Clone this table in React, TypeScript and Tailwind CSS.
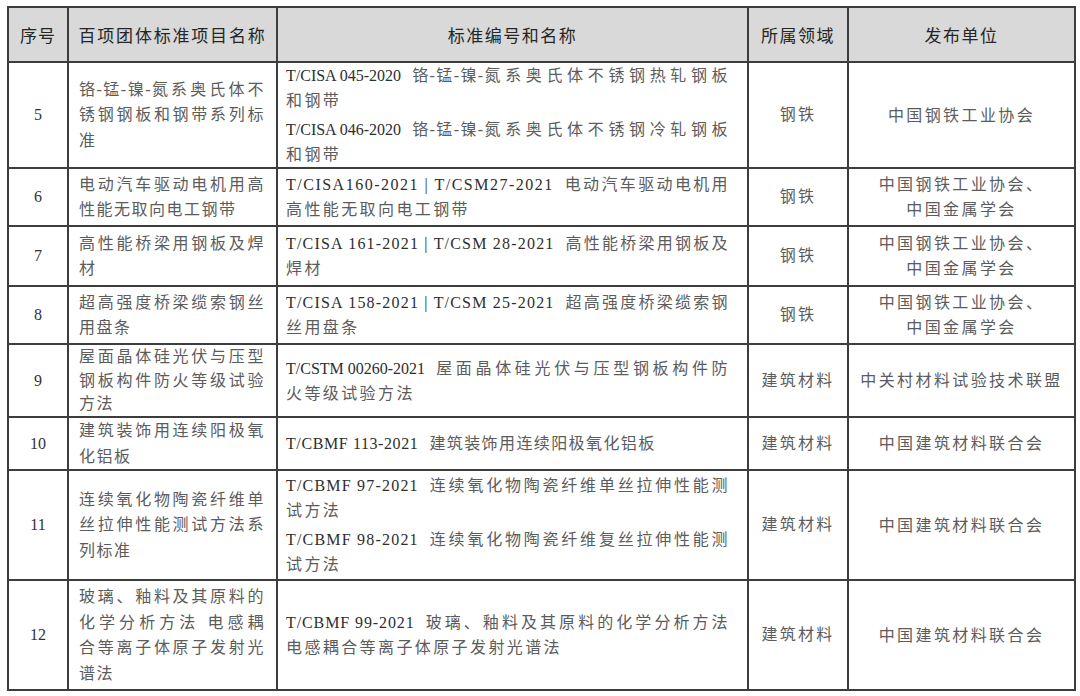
type Std = { code: string; title: string[]; ct?: string; tt?: string };

type Row = {
  no: string;
  name: string[];
  standards: Std[];
  field: string;
  org: string[];
  h: string;
  tight?: boolean;
};

// title[0] follows the code on the first line, the rest are extra lines
// ct = tracking of the code, tt = tracking of an unwrapped last line
const rows: Row[] = [
  {
    no: "5",
    name: ["铬-锰-镍-氮系奥氏体不", "锈钢钢板和钢带系列标", "准"],
    standards: [
      { code: "T/CISA 045-2020", title: ["铬-锰-镍-氮系奥氏体不锈钢热轧钢板", "和钢带"] },
      { code: "T/CISA 046-2020", title: ["铬-锰-镍-氮系奥氏体不锈钢冷轧钢板", "和钢带"] },
    ],
    field: "钢铁",
    org: ["中国钢铁工业协会"],
    h: "h-[106px]",
  },
  {
    no: "6",
    name: ["电动汽车驱动电机用高", "性能无取向电工钢带"],
    standards: [
      {
        code: "T/CISA160-2021 | T/CSM27-2021",
        title: ["电动汽车驱动电机用", "高性能无取向电工钢带"],
        ct: "tracking-[1.5px]",
      },
    ],
    field: "钢铁",
    org: ["中国钢铁工业协会、", "中国金属学会"],
    h: "h-[58px]",
  },
  {
    no: "7",
    name: ["高性能桥梁用钢板及焊", "材"],
    standards: [
      {
        code: "T/CISA 161-2021 | T/CSM 28-2021",
        title: ["高性能桥梁用钢板及", "焊材"],
        ct: "tracking-[1.2px]",
      },
    ],
    field: "钢铁",
    org: ["中国钢铁工业协会、", "中国金属学会"],
    h: "h-[60px]",
  },
  {
    no: "8",
    name: ["超高强度桥梁缆索钢丝", "用盘条"],
    standards: [
      {
        code: "T/CISA 158-2021 | T/CSM 25-2021",
        title: ["超高强度桥梁缆索钢", "丝用盘条"],
        ct: "tracking-[1.2px]",
      },
    ],
    field: "钢铁",
    org: ["中国钢铁工业协会、", "中国金属学会"],
    h: "h-[58px]",
  },
  {
    no: "9",
    name: ["屋面晶体硅光伏与压型", "钢板构件防火等级试验", "方法"],
    standards: [
      { code: "T/CSTM 00260-2021", title: ["屋面晶体硅光伏与压型钢板构件防", "火等级试验方法"] },
    ],
    field: "建筑材料",
    org: ["中关村材料试验技术联盟"],
    h: "h-[73px]",
    tight: true,
  },
  {
    no: "10",
    name: ["建筑装饰用连续阳极氧", "化铝板"],
    standards: [
      {
        code: "T/CBMF 113-2021",
        title: ["建筑装饰用连续阳极氧化铝板"],
        ct: "tracking-[0.6px]",
        tt: "tracking-[1.4px]",
      },
    ],
    field: "建筑材料",
    org: ["中国建筑材料联合会"],
    h: "h-[51px]",
  },
  {
    no: "11",
    name: ["连续氧化物陶瓷纤维单", "丝拉伸性能测试方法系", "列标准"],
    standards: [
      {
        code: "T/CBMF 97-2021",
        title: ["连续氧化物陶瓷纤维单丝拉伸性能测", "试方法"],
        ct: "tracking-[1.2px]",
      },
      {
        code: "T/CBMF 98-2021",
        title: ["连续氧化物陶瓷纤维复丝拉伸性能测", "试方法"],
        ct: "tracking-[1.2px]",
      },
    ],
    field: "建筑材料",
    org: ["中国建筑材料联合会"],
    h: "h-[110px]",
  },
  {
    no: "12",
    name: ["玻璃、釉料及其原料的", "化学分析方法 电感耦", "合等离子体原子发射光", "谱法"],
    standards: [
      {
        code: "T/CBMF 99-2021",
        title: ["玻璃、釉料及其原料的化学分析方法", "电感耦合等离子体原子发射光谱法"],
        ct: "tracking-[0.9px]",
      },
    ],
    field: "建筑材料",
    org: ["中国建筑材料联合会"],
    h: "h-[110px]",
  },
];

const td = "border-2 border-[#3d3d3d] align-middle p-0";
const cjk = "text-[#5c5c5c]";
const justify = "text-justify [text-align-last:justify]";

// keep hyphenated runs like 铬-锰-镍-氮 tight when the line is justified
function Tight({ text }: { text: string }) {
  const parts = text.split(/(\S(?:-\S)+)/);
  return (
    <>
      {parts.map((p, i) =>
        i % 2 === 1 ? (
          <span key={i} className="inline-block">
            {p}
          </span>
        ) : (
          p
        )
      )}
    </>
  );
}

function NameLines({ lines }: { lines: string[] }) {
  return (
    <>
      {lines.map((l, i) => (
        <div key={i} className={i < lines.length - 1 ? justify : "whitespace-nowrap"}>
          <Tight text={l} />
        </div>
      ))}
    </>
  );
}

function Standard({ s }: { s: Std }) {
  const wrapped = s.title.length > 1;
  return (
    <div>
      <div className="flex">
        <span className={`whitespace-nowrap text-[#2e2e2e] ${s.ct ?? "tracking-normal"}`}>
          {s.code}
        </span>
        <span
          className={`${cjk} ml-[11px] ${
            wrapped ? `flex-1 ${justify}` : `whitespace-nowrap ${s.tt ?? "tracking-[2.4px]"}`
          }`}
        >
          <Tight text={s.title[0]} />
        </span>
      </div>
      {s.title.slice(1).map((t) => (
        <div key={t} className={`whitespace-nowrap tracking-[2.4px] ${cjk}`}>
          {t}
        </div>
      ))}
    </div>
  );
}

export default function App() {
  return (
    <div className="w-[1080px] h-[696px] bg-white pt-[6px] pl-[7px] [font-family:'Liberation_Serif','Noto_Sans_CJK_SC',serif] text-[16px] tracking-[1.4px]">
      <table className="table-fixed border-collapse w-[1067px]">
        <colgroup>
          <col className="w-[60px]" />
          <col className="w-[209px]" />
          <col className="w-[471px]" />
          <col className="w-[100px]" />
          <col className="w-[227px]" />
        </colgroup>
        <thead>
          <tr className="h-[55px] bg-[#d9d9d9] text-[#262626] [font-family:'Noto_Sans_CJK_SC',sans-serif] text-[17px]">
            <th className={`${td} font-normal tracking-[1px]`}>序号</th>
            <th className={`${td} font-normal tracking-[1.8px]`}>百项团体标准项目名称</th>
            <th className={`${td} font-normal tracking-[1.5px]`}>标准编号和名称</th>
            <th className={`${td} font-normal tracking-[1.5px]`}>所属领域</th>
            <th className={`${td} font-normal tracking-[1.5px]`}>发布单位</th>
          </tr>
        </thead>
        <tbody>
          {rows.map((r) => (
            <tr key={r.no} className={r.h}>
              <td className={`${td} text-center text-[#333] tracking-normal`}>{r.no}</td>
              <td
                className={`${td} pl-[10px] pr-[11px] ${cjk} tracking-[1.5px] ${
                  r.tight ? "leading-[23.5px]" : "leading-[25.5px]"
                }`}
              >
                <NameLines lines={r.name} />
              </td>
              <td className={`${td} pl-[8px] pr-[18px] leading-[25px]`}>
                <div className="flex flex-col gap-[4px]">
                  {r.standards.map((s) => (
                    <Standard key={s.code} s={s} />
                  ))}
                </div>
              </td>
              <td className={`${td} text-center tracking-[2.2px] ${cjk}`}>{r.field}</td>
              <td className={`${td} ${cjk} tracking-[2.4px] leading-[25px]`}>
                {r.org.map((o) => (
                  <div key={o} className="whitespace-nowrap text-center">
                    {o}
                  </div>
                ))}
              </td>
            </tr>
          ))}
        </tbody>
      </table>
    </div>
  );
}
